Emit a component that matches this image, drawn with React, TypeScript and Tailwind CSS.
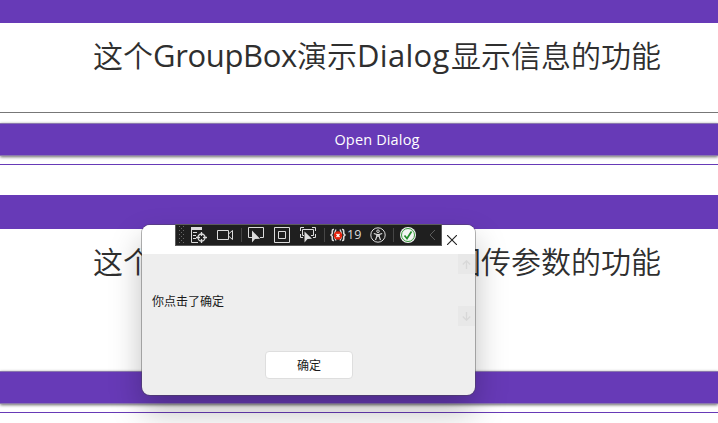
import type { ReactNode } from "react";

const CJK = "font-['Noto_Sans_CJK_SC',sans-serif]";

function Title({ tail }: { tail: string }) {
  return (
    <h1 className={`flex h-[44px] w-[568px] items-baseline whitespace-nowrap text-[30px] leading-[44px] text-[#2f2f2f] font-[350] ${CJK}`}>
      <span className="w-[60px]">这个</span>
      <span className="w-[144px] font-['Open_Sans',sans-serif] text-[31px] font-normal tracking-[-0.35px]">GroupBox</span>
      <span className="w-[60px]">演示</span>
      <span className="w-[94px] font-['Open_Sans',sans-serif] text-[31px] font-normal tracking-[0.3px]">Dialog</span>
      <span>{tail}</span>
    </h1>
  );
}

function WideButton({ children }: { children?: ReactNode }) {
  return (
    <button className="block h-[33px] w-full border-y border-[#8a78ad] bg-[#673ab7] text-center font-['Open_Sans',sans-serif] text-[14.5px] leading-[31px] tracking-[0.15px] text-white shadow-[0_1px_3px_rgba(0,0,0,0.6)]">
      {children}
    </button>
  );
}

function Icon({ children, className = "" }: { children: ReactNode; className?: string }) {
  return (
    <svg viewBox="0 0 16 16" className={`h-4 w-4 shrink-0 ${className}`} fill="none" stroke="#dcdcdc" strokeWidth="1">
      {children}
    </svg>
  );
}

function Divider({ className = "" }: { className?: string }) {
  return <span className={`h-[14px] w-px shrink-0 bg-[#464646] ${className}`} />;
}

const GRIP = [0, 1, 2, 3, 4, 5, 6, 7, 8];

function Toolbar() {
  return (
    <div className="absolute left-[33px] top-[-1px] flex h-[22px] w-[267px] items-center border border-[#5c5c5c] bg-[#1f1f1f] pl-[3px]">
      <svg viewBox="0 0 6 18" className="h-[18px] w-[6px] shrink-0" fill="#686868">
        {GRIP.map((r) =>
          r % 2 === 0 ? (
            <g key={r}>
              <rect x="0" y={r * 2} width="1" height="1" />
              <rect x="4" y={r * 2} width="1" height="1" />
            </g>
          ) : (
            <rect key={r} x="2" y={r * 2} width="1" height="1" />
          ),
        )}
      </svg>
      <Icon className="ml-[6px]">
        <path d="M0 0h11v3H0z" fill="#dcdcdc" stroke="none" />
        <path d="M.5 3v12.5H7M2 5.5h4M2 8.5h3M2 11.5h3" />
        <circle cx="10.5" cy="10.5" r="3.5" strokeWidth="1.3" />
        <path d="M10.5 5v4M10.5 12v4M5 10.5h4M12 10.5h4" strokeWidth="1.3" />
      </Icon>
      <Icon className="ml-[10px]">
        <path d="M.5 3.5h11v9H.5zM11.5 7l4-3.5v9l-4-3.5" />
      </Icon>
      <Divider className="ml-[8px]" />
      <Icon className="ml-[6px]">
        <path d="M4 10.5H.5v-10h15v10H12" />
        <path d="M4 3.5v12l3-3.500 5-.2z" fill="#dcdcdc" stroke="none" />
      </Icon>
      <Icon className="ml-[10px]">
        <path d="M.5.5h15v15H.5zM4.5 4.5h7v7h-7z" />
      </Icon>
      <Icon className="ml-[10px]">
        <path d="M.5 4V.5H4M12 .5h3.5V4M15.5 7v3.5H13M.5 7v3.5H3M4 8.5H2.5v-6h11v6H11" />
        <path d="M4.500 4.500v11l3-3.500 4.500-.2z" fill="#dcdcdc" stroke="none" />
      </Icon>
      <Divider className="ml-[8px]" />
      <Icon className="ml-[5px]">
        <path d="M4 2.500H3.300Q2.300 2.500 2.300 4v2.500L1 8l1.300 1.500V12q0 1.500 1 1.500H4M12 2.500h.7q1 0 1 1.500v2.500L15 8l-1.300 1.500V12q0 1.500-1 1.500H12" strokeWidth="1.600" />
        <path d="M6 2.500Q3 8 6 13.500M10 2.500q3 5.500 0 11" strokeWidth="1.300" />
        <circle cx="8" cy="8.500" r="4.200" fill="#e5220c" stroke="none" />
        <path d="m6.500 7 3 3m0-3-3 3" stroke="#fff" strokeWidth="1.300" />
      </Icon>
      <span className="ml-px w-[15px] shrink-0 font-['Open_Sans',sans-serif] text-[12.5px] leading-[20px] text-[#dcdcdc]">19</span>
      <Icon className="ml-[8px]">
        <circle cx="8" cy="8" r="7.200" />
        <circle cx="8" cy="4.200" r="1.300" />
        <path d="M3.800 6.500 6.800 7.500v2L5.500 13M12.200 6.500l-3 1v2l1.300 3.500M6.800 7.500h2.400M6.800 9.500 8 9l1.200.5" strokeWidth="1.200" />
      </Icon>
      <Divider className="ml-[7px]" />
      <Icon className="ml-[6px]">
        <circle cx="8" cy="8" r="8" fill="#f0f0f0" stroke="none" />
        <circle cx="8" cy="8" r="6.500" fill="#f4f4f4" stroke="#389a3c" />
        <path d="m4.500 8.500 2.500 3 4.500-7" stroke="#238b2b" strokeWidth="1.700" />
      </Icon>
      <svg viewBox="0 0 7 12" className="ml-[13px] h-[12px] w-[7px] shrink-0" fill="none" stroke="#5c5c5c">
        <path d="M6 1 1 6l5 5" />
      </svg>
    </div>
  );
}

function ScrollArrow({ down = false }: { down?: boolean }) {
  return (
    <span className="flex h-[20px] w-[17px] items-center justify-center bg-[#e8e8e8]">
      <svg viewBox="0 0 9 9" className={`h-[9px] w-[9px] ${down ? "rotate-180" : ""}`} fill="none" stroke="#d8d8d8" strokeWidth="1.3">
        <path d="M4.500 9V1M.8 4.500l3.700-3.700 3.700 3.700" />
      </svg>
    </span>
  );
}

function MessageDialog() {
  return (
    <div className="absolute left-[142px] top-[225px] h-[170px] w-[333px] rounded-[8px] bg-[#eee] shadow-[0_0_0_1px_rgba(70,70,70,0.4),0_16px_32px_rgba(0,0,0,0.26)]">
      <div className="flex h-[29px] items-center justify-end rounded-t-[8px] bg-white pr-[18px] pt-px">
        <svg viewBox="0 0 10 10" className="h-[10px] w-[10px]" fill="none" stroke="#222" strokeWidth="1.1">
          <path d="m0 0 10 10M10 0 0 10" />
        </svg>
      </div>
      <div className="flex h-[72px] justify-between pl-[10px]">
        <p className={`pt-[38px] text-[12px] leading-[18px] text-[#1a1a1a] ${CJK}`}>你点击了确定</p>
        <div className="flex flex-col justify-between">
          <ScrollArrow />
          <ScrollArrow down />
        </div>
      </div>
      <div className="flex justify-center pt-[25px] pl-px">
        <button className={`h-[28px] w-[88px] rounded-[4px] border border-[#dedede] bg-white text-[12px] leading-[26px] text-[#1a1a1a] ${CJK}`}>确定</button>
      </div>
      <Toolbar />
    </div>
  );
}

export default function App() {
  return (
    <div className="relative h-[423px] w-[718px] overflow-hidden bg-white">
      <section className="h-[165px] border-b border-[#673ab7]">
        <div className="h-[23px] bg-[#673ab7]" />
        <div className="flex h-[90px] justify-center border-b border-[#777] pl-[36px] pt-[9px]">
          <Title tail="显示信息的功能" />
        </div>
        <div className="pt-[10px]">
          <WideButton><span className="pl-[36px]">Open Dialog</span></WideButton>
        </div>
      </section>
      <section className="mt-[30px] h-[218px] border-b border-[#673ab7]">
        <div className="h-[34px] bg-[#673ab7]" />
        <div className="flex h-[142px] justify-center pl-[36px] pt-[9px]">
          <Title tail="回传参数的功能" />
        </div>
        <WideButton />
      </section>
      <MessageDialog />
    </div>
  );
}
